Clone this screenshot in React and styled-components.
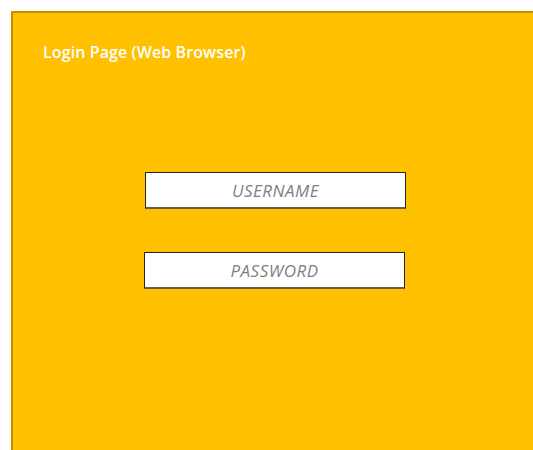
import React from "react";
import styled, { createGlobalStyle } from "styled-components";

const Global = createGlobalStyle`
  html, body {
    margin: 0;
    padding: 0;
    background: #ffffff;
    overflow: hidden;
  }
  body {
    font-family: "Open Sans", "Liberation Sans", sans-serif;
  }
`;

const Canvas = styled.div`
  width: 533px;
  height: 450px;
  padding: 11px 0 0 11px;
  box-sizing: border-box;
  overflow: hidden;
`;

const Panel = styled.section`
  box-sizing: border-box;
  width: 540px;
  min-height: 460px;
  background: #ffc000;
  border-top: 2px solid #bf9000;
  border-left: 2px solid #bf9000;
  padding: 29px 0 0 30px;
  display: flex;
  flex-direction: column;
`;

const Title = styled.h1`
  margin: 0;
  font-size: 16px;
  line-height: 20px;
  font-weight: 600;
  color: #ffffff;
  letter-spacing: 0.1px;
`;

const Form = styled.form`
  display: flex;
  flex-direction: column;
  gap: 43px;
  margin: 110px 0 0 101px;
`;

const Field = styled.div`
  box-sizing: border-box;
  width: 261px;
  height: 37px;
  margin-left: ${(p) => p.$shift || 0}px;
  background: #ffffff;
  border: 1px solid #262626;
  border-bottom: 2px solid #6b5e44;
  display: flex;
  align-items: center;
  justify-content: center;
  font-size: 17px;
  font-style: italic;
  color: #7f7f7f;
  letter-spacing: 0.5px;
`;

export default function App() {
  return (
    <>
      <Global />
      <Canvas>
        <Panel>
          <Title>Login Page (Web Browser)</Title>
          <Form>
            <Field $shift={1}>USERNAME</Field>
            <Field>PASSWORD</Field>
          </Form>
        </Panel>
      </Canvas>
    </>
  );
}
